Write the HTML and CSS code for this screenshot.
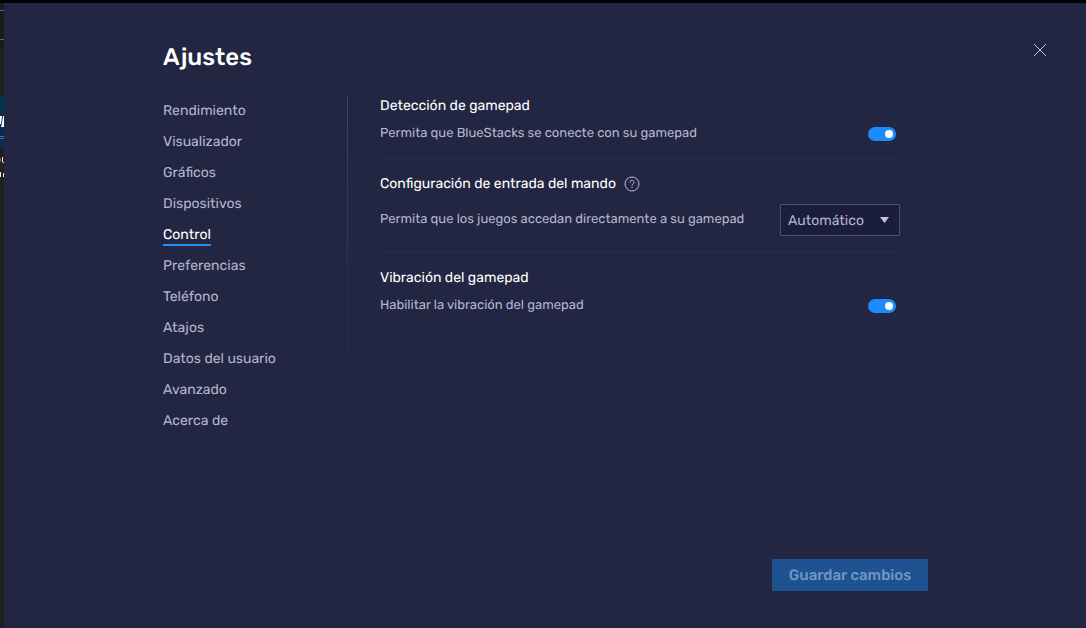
FILE: index.html
```html
<!DOCTYPE html>
<html lang="es">
<head>
<meta charset="utf-8">
<meta name="viewport" content="width=device-width, initial-scale=1">
<title>Ajustes</title>
<link rel="stylesheet" href="styles.css">
</head>
<body>
<div class="screen">
  <div class="backdrop" aria-hidden="true">
    <svg class="backdrop-art" width="4" height="200" viewBox="0 0 4 200">
      <rect y="0" width="4" height="44" fill="#191a1b"/>
      <path d="M0 7.500h4M0 36.500h4" stroke="#62645c"/>
      <rect y="93" width="4" height="18" fill="#05344f"/>
      <rect y="111" width="4" height="33" fill="#0b2a55"/>
      <path d="M0 113h2l-1 8H0zM3 113h1v11H1l1-4z" fill="#fff"/>
      <path d="M0 133.500h4M0 135.500h4" stroke="#477399"/>
      <path d="M0 155v4" stroke="#b04458" stroke-width="2"/>
      <path d="M2.500 154v5l1.500 1M.5 169v5M3.500 170v4" fill="none" stroke="#eee"/>
    </svg>
  </div>
  <div class="settings">
    <header class="header">
      <h1 class="title">Ajustes</h1>
      <button class="close" type="button" aria-label="Cerrar">
        <svg width="12" height="12" viewBox="0 0 12 12"><path d="M0 0l12 12M12 0L0 12" stroke="#c3c5dc" stroke-width="1"/></svg>
      </button>
    </header>
    <div class="body">
      <nav class="menu">
        <a class="menu-item" href="#rendimiento">Rendimiento</a>
        <a class="menu-item" href="#visualizador">Visualizador</a>
        <a class="menu-item" href="#graficos">Gráficos</a>
        <a class="menu-item" href="#dispositivos">Dispositivos</a>
        <a class="menu-item menu-item-active" href="#control" aria-current="page">Control</a>
        <a class="menu-item" href="#preferencias">Preferencias</a>
        <a class="menu-item" href="#telefono">Teléfono</a>
        <a class="menu-item" href="#atajos">Atajos</a>
        <a class="menu-item" href="#datos">Datos del usuario</a>
        <a class="menu-item" href="#avanzado">Avanzado</a>
        <a class="menu-item" href="#acerca">Acerca de</a>
      </nav>
      <div class="divider"></div>
      <main class="content">
        <section class="group">
          <h2 class="group-title">Detección de gamepad</h2>
          <div class="row">
            <label class="text" for="detect">Permita que BlueStacks se conecte con su gamepad</label>
            <input class="toggle" id="detect" type="checkbox" role="switch" checked>
          </div>
        </section>
        <section class="group">
          <h2 class="group-title">Configuración de entrada del mando
            <button class="help" type="button" aria-label="Ayuda">
              <svg width="16" height="16" viewBox="0 0 16 16" fill="none" stroke="#b9bbd4"><circle cx="8" cy="8" r="7"/><path d="M5.900 6.500C5.900 3.700 10.100 3.700 10.100 6.400C10.100 7.900 8 7.800 8 9.700M8 10.800V12"/></svg>
            </button>
          </h2>
          <div class="row row-tall">
            <label class="text" for="mode">Permita que los juegos accedan directamente a su gamepad</label>
            <div class="picker">
              <select class="select" id="mode"><option>Automático</option></select>
              <svg class="arrow" width="9" height="6" viewBox="0 0 9 6"><path d="M0 0h9L4.500 6z" fill="#c3c5dc"/></svg>
            </div>
          </div>
        </section>
        <section class="group">
          <h2 class="group-title">Vibración del gamepad</h2>
          <div class="row">
            <label class="text" for="vibrate">Habilitar la vibración del gamepad</label>
            <input class="toggle" id="vibrate" type="checkbox" role="switch" checked>
          </div>
        </section>
      </main>
    </div>
    <footer class="footer">
      <button class="save" type="button" disabled>Guardar cambios</button>
    </footer>
  </div>
</div>
</body>
</html>
```
FILE: styles.css
```css
* { box-sizing: border-box; }

body {
  margin: 0;
  background: #232642;
  color: #b3b5ce;
  font-family: Rubik, Roboto, "Noto Sans", sans-serif;
  font-size: 14px;
  text-rendering: geometricPrecision;
}

button, select { font: inherit; text-rendering: inherit; }

.screen {
  display: grid;
  grid-template-columns: 4px 1fr;
  min-height: 100vh;
  border-top: 3px solid #000;
}

.backdrop { background: #202021; }
.backdrop-art { display: block; }

.settings {
  display: flex;
  flex-direction: column;
  padding: 38px 38px 37px 159px;
}

.header {
  display: flex;
  justify-content: space-between;
  align-items: flex-start;
}

.title {
  margin: 0;
  color: #fff;
  font-size: 24px;
  font-weight: 500;
  line-height: 32px;
}

.close, .help {
  display: flex;
  padding: 0;
  border: 0;
  background: none;
}

.close { margin-right: 2px; padding: 3px 0; }

.body {
  display: grid;
  grid-template-columns: 184px 1px 1fr;
  margin: 23px 148px 0 0;
}

.menu {
  display: flex;
  flex-direction: column;
  align-items: flex-start;
  gap: 11px;
  padding-top: 6px;
}

.menu-item {
  border-bottom: 2px solid transparent;
  color: #b3b5ce;
  font-size: 14px;
  line-height: 18px;
  text-decoration: none;
}

.menu-item-active {
  border-color: #1f8ffb;
  color: #fff;
}

.divider {
  height: 312px;
  background: linear-gradient(#41445f, #303350 50%, #232642);
}

.content { padding-left: 32px; }

.group { border-bottom: 1px solid #2d304c; padding: 15px 0 14px; }
.group:first-child { padding-top: 0; }
.group:last-child { border-bottom: 0; }

.group-title {
  display: flex;
  align-items: center;
  gap: 8px;
  margin: 0;
  color: #fff;
  font-size: 14px;
  font-weight: 400;
  line-height: 20px;
}

.row {
  display: flex;
  align-items: center;
  justify-content: space-between;
  margin-top: 8px;
}

.row-tall { margin: 10px 0 2px; }

.text { font-size: 13px; line-height: 20px; }

.toggle {
  appearance: none;
  display: flex;
  align-items: center;
  justify-content: flex-end;
  width: 28px;
  height: 14px;
  margin: 0 4px 0 0;
  padding: 3px;
  border-radius: 7px;
  background: #1b8bff;
}

.toggle::before {
  width: 8px;
  height: 8px;
  border-radius: 50%;
  background: #fff;
  content: "";
}

.toggle:not(:checked) { justify-content: flex-start; background: #5c5f7c; }

.picker { display: grid; align-items: center; width: 120px; }

.select, .arrow { grid-area: 1 / 1; }

.select {
  appearance: none;
  width: 100%;
  height: 32px;
  padding: 0 7px;
  border: 1px solid #4b4e6c;
  border-radius: 0;
  background: #1b1e3a;
  color: #b3b5ce;
  font-size: 14px;
}

.arrow { justify-self: end; margin-right: 11px; pointer-events: none; }

.footer {
  display: flex;
  justify-content: flex-end;
  margin-top: auto;
  padding-right: 120px;
}

.save {
  min-width: 156px;
  height: 32px;
  padding: 0 16px;
  border: 0;
  background: #1f5290;
  color: #6f97c6;
  font-size: 15px;
  font-weight: 500;
  white-space: nowrap;
}
```
